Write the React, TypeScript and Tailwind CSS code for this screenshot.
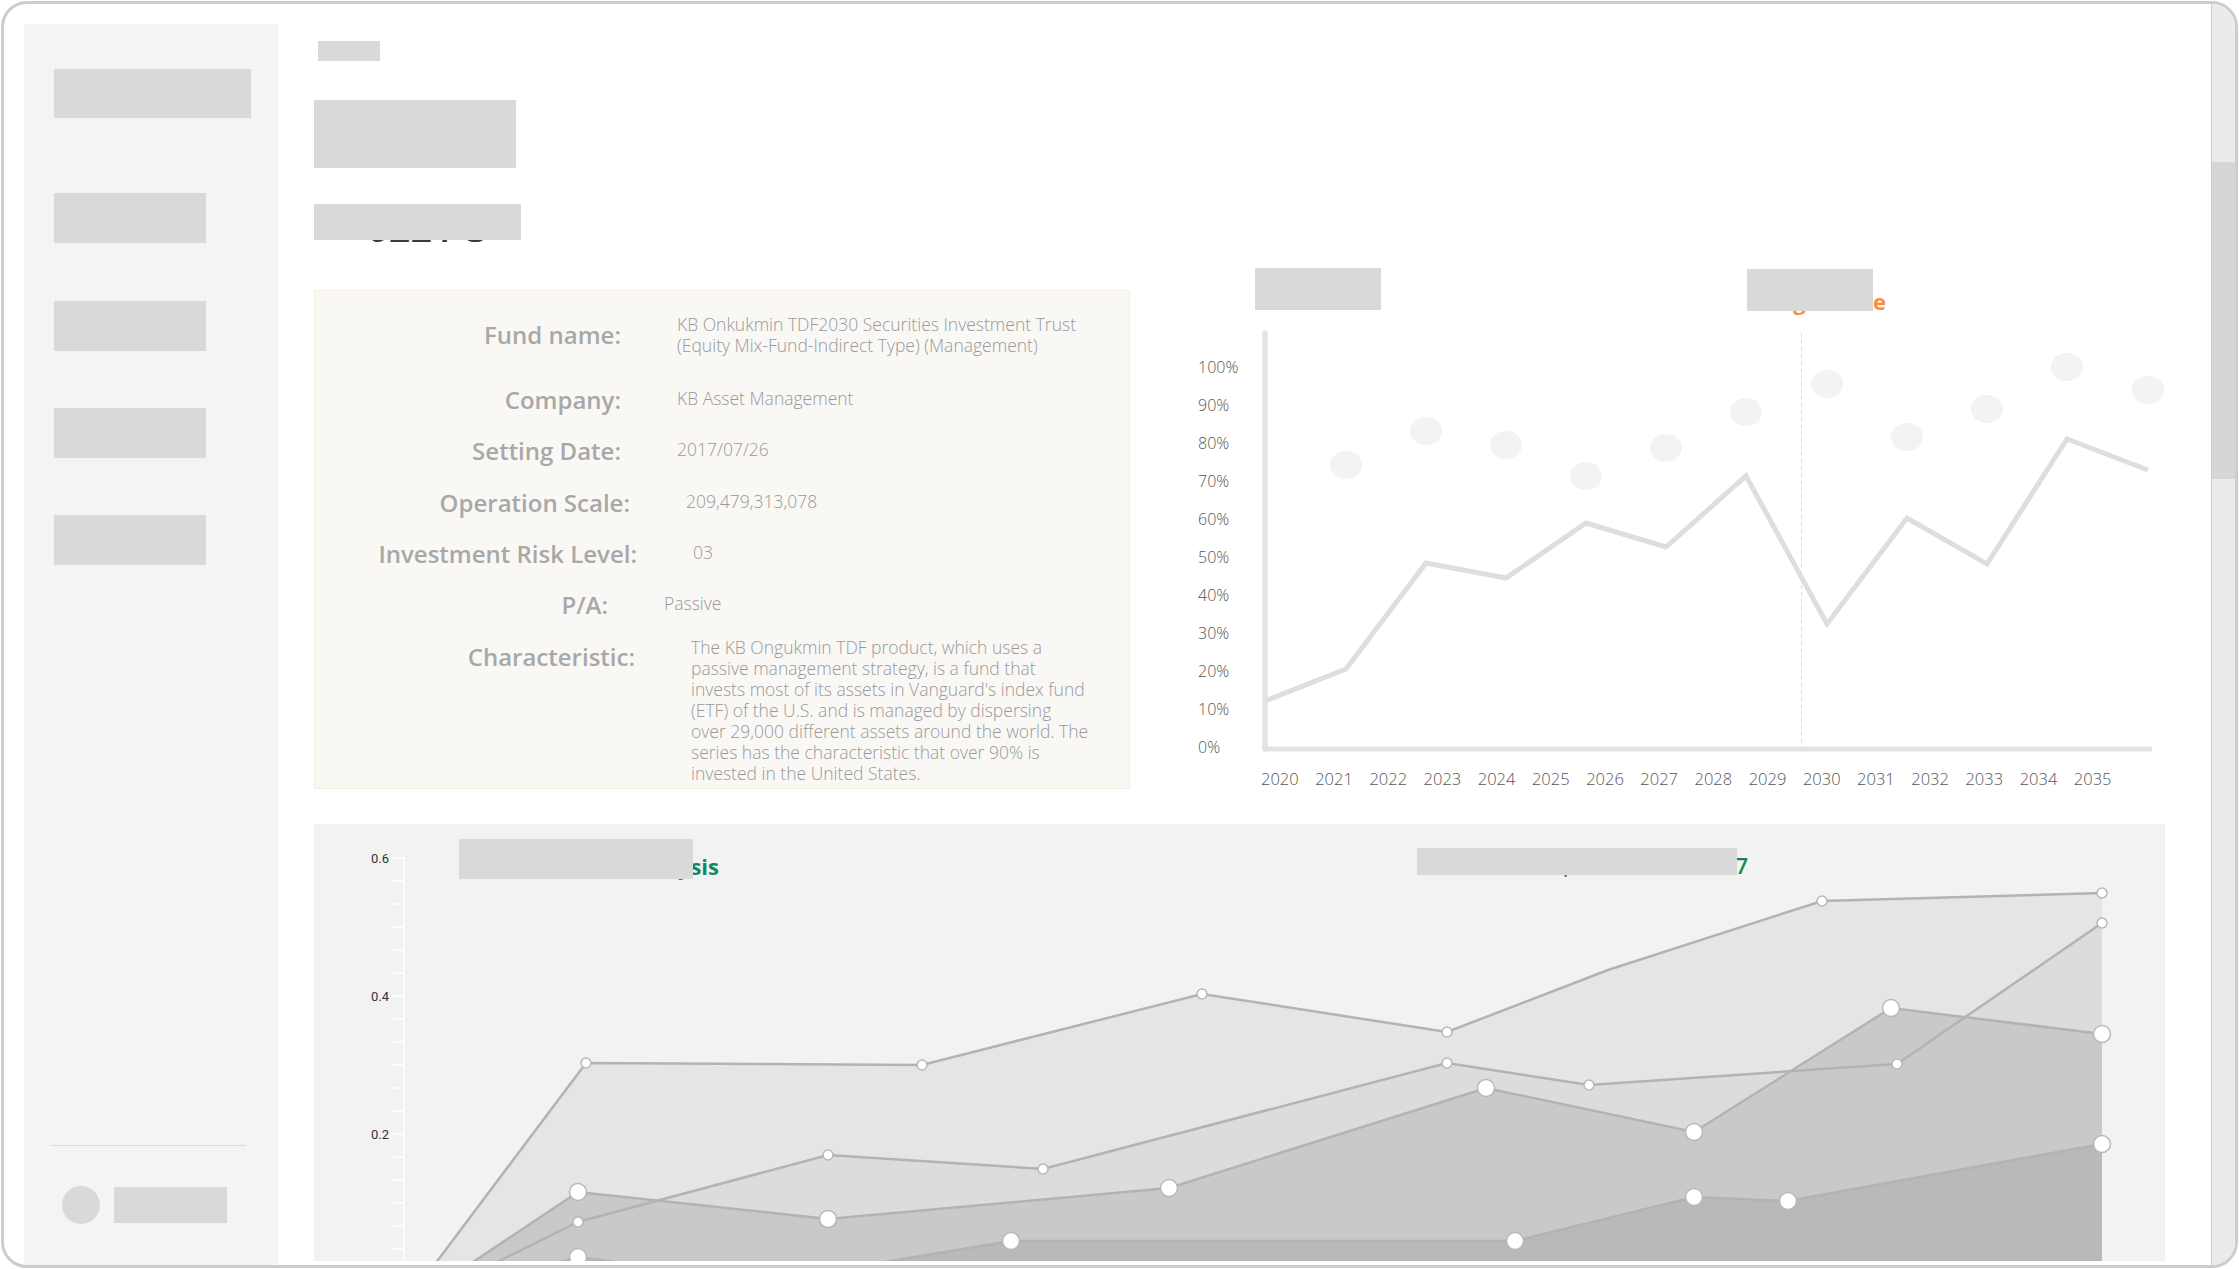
import React from 'react';

type InfoRow = {
    label: string;
    labelCls: string;
    rowCls: string;
    value: React.ReactNode;
    valueCls: string;
};

const infoRows: InfoRow[] = [
    {
        label: 'Fund name:',
        labelCls: 'w-[306px]',
        rowCls: 'items-center',
        value: (
            <>
                KB Onkukmin TDF2030 Securities Investment Trust
                <br />
                (Equity Mix-Fund-Indirect Type) (Management)
            </>
        ),
        valueCls: '',
    },
    { label: 'Company:', labelCls: 'w-[306px]', rowCls: 'mt-[26px] items-center', value: 'KB Asset Management', valueCls: 'pb-1' },
    { label: 'Setting Date:', labelCls: 'w-[306px]', rowCls: 'mt-[15px] items-center', value: '2017/07/26', valueCls: 'pb-1' },
    { label: 'Operation Scale:', labelCls: 'w-[315px]', rowCls: 'mt-4 items-center', value: '209,479,313,078', valueCls: 'pb-1' },
    { label: 'Investment Risk Level:', labelCls: 'w-[322px]', rowCls: 'mt-[15px] items-center', value: '03', valueCls: 'pb-1' },
    { label: 'P/A:', labelCls: 'w-[293px]', rowCls: 'mt-[15px] items-center', value: 'Passive', valueCls: 'pb-1' },
    {
        label: 'Characteristic:',
        labelCls: 'w-[320px] mt-[2px]',
        rowCls: 'mt-[14px] items-start',
        value: (
            <>
                The KB Ongukmin TDF product, which uses a<br />
                passive management strategy, is a fund that<br />
                invests most of its assets in Vanguard's index fund<br />
                (ETF) of the U.S. and is managed by dispersing<br />
                over 29,000 different assets around the world. The<br />
                series has the characteristic that over 90% is<br />
                invested in the United States.
            </>
        ),
        valueCls: '',
    },
];

const percentLabels = ['100%', '90%', '80%', '70%', '60%', '50%', '40%', '30%', '20%', '10%', '0%'];
const years = Array.from({ length: 16 }, (_, i) => 2020 + i);

// ratio line (svg coords, origin at plot top-left)
const ratioLine: [number, number][] = [
    [3, 371], [84, 339], [164, 233], [244, 248], [324, 193], [404, 217],
    [484, 146], [565, 294], [645, 188], [725, 234], [805, 109], [886, 140],
];
const bubbles: [number, number][] = [
    [84, 135], [164, 101], [244, 115], [324, 146], [404, 118], [484, 82],
    [565, 54], [645, 107], [725, 79], [805, 37], [886, 60],
];

type Series = { pts: [number, number][]; fill: string; r: number; skip: number[] };

// stacked area series (panel coords)
const areaSeries: Series[] = [
    {
        pts: [[91, 480], [272, 239], [608, 241], [888, 170], [1133, 208], [1294, 146], [1508, 77], [1788, 69]],
        fill: '#e5e5e5',
        r: 5,
        skip: [0, 5],
    },
    {
        pts: [[98, 480], [264, 398], [514, 331], [729, 345], [1133, 239], [1275, 261], [1583, 240], [1788, 99]],
        fill: '#dcdcdc',
        r: 5,
        skip: [0],
    },
    {
        pts: [[96, 480], [264, 368], [514, 395], [855, 364], [1172, 264], [1380, 308], [1577, 184], [1788, 210]],
        fill: '#c9c9c9',
        r: 8.5,
        skip: [0],
    },
    {
        pts: [[100, 480], [264, 433], [450, 458], [697, 417], [1201, 417], [1380, 373], [1474, 377], [1788, 320]],
        fill: '#b9b9b9',
        r: 8.5,
        skip: [0, 2],
    },
];

const toPoints = (pts: [number, number][]) => pts.map(([x, y]) => `${x},${y}`).join(' ');

function Sidebar() {
    return (
        <aside className="flex w-[254px] shrink-0 flex-col bg-[#f4f4f4] pb-[41px] pt-[45px]">
            <div className="ml-[30px] h-[49px] w-[197px] bg-[#d9d9d9]" />
            <div className="ml-[30px] mt-[75px] h-[50px] w-[152px] bg-[#d9d9d9]" />
            <div className="ml-[30px] mt-[58px] h-[50px] w-[152px] bg-[#d9d9d9]" />
            <div className="ml-[30px] mt-[57px] h-[50px] w-[152px] bg-[#d9d9d9]" />
            <div className="ml-[30px] mt-[57px] h-[50px] w-[152px] bg-[#d9d9d9]" />

            <div className="mt-auto">
                <div className="ml-[27px] h-px w-[195px] bg-[#d9d9d9]" />
                <div className="ml-[38px] mt-10 flex items-center">
                    <div className="h-[38px] w-[38px] rounded-full bg-[#d9d9d9]" />
                    <div className="ml-[14px] h-9 w-[113px] bg-[#d9d9d9]" />
                </div>
            </div>
        </aside>
    );
}

function InfoCard() {
    return (
        <div className="mt-[22px] h-[499px] w-[816px] shrink-0 border border-[#f3eee3] bg-[#f9f8f5] pt-[23px]">
            {infoRows.map((row) => (
                <div key={row.label} className={`flex ${row.rowCls}`}>
                    <div className={`shrink-0 text-right text-[24px] font-semibold leading-[36px] text-[#a8a8a8] ${row.labelCls}`}>
                        {row.label}
                    </div>
                    <div className={`ml-14 whitespace-nowrap text-[17.5px] font-light leading-[21px] text-[#999999] ${row.valueCls}`}>
                        {row.value}
                    </div>
                </div>
            ))}
        </div>
    );
}

function RatioChart() {
    return (
        <div className="ml-[68px] min-w-0 flex-1">
            {/* Titles */}
            <div className="flex h-[42px] items-start">
                <div className="ml-[57px] h-[42px] w-[126px] bg-[#d9d9d9]" />
                <div className="relative ml-[366px] mt-px h-[42px] w-[126px]">
                    <span className="absolute right-[-13px] top-[21px] whitespace-nowrap text-[22px] font-bold leading-none text-[#ff8a3d]">
                        Target Date
                    </span>
                    <div className="absolute inset-0 bg-[#d9d9d9]" />
                </div>
            </div>

            {/* Plot */}
            <div className="mt-5 flex h-[422px]">
                <div className="flex h-[422px] w-[64px] shrink-0 flex-col pt-[18px]">
                    {percentLabels.map((p) => (
                        <div key={p} className="h-[38px] shrink-0 text-[16px] font-light leading-[38px] text-[#555555]">
                            {p}
                        </div>
                    ))}
                </div>
                <svg width={903} height={422} className="block shrink-0">
                    <line x1={3} y1={3} x2={3} y2={419} stroke="#e3e3e3" strokeWidth={5.5} strokeLinecap="round" />
                    <line x1={3} y1={419} x2={888} y2={419} stroke="#e3e3e3" strokeWidth={5} strokeLinecap="round" />
                    <line x1={539.5} y1={3} x2={539.5} y2={421} stroke="#dddddd" strokeWidth={1} strokeDasharray="4 3" />
                    <polyline points={toPoints(ratioLine)} fill="none" stroke="#dedede" strokeWidth={5} />
                    {bubbles.map(([cx, cy]) => (
                        <ellipse key={cx} cx={cx} cy={cy} rx={16} ry={14} fill="#f3f3f3" />
                    ))}
                </svg>
            </div>

            <div className="mt-[17px] flex pl-[63px]">
                {years.map((y) => (
                    <div key={y} className="w-[54.2px] shrink-0 text-[16.5px] font-light leading-5 text-[#555555]">
                        {y}
                    </div>
                ))}
            </div>
        </div>
    );
}

function AreaPanel() {
    const ticks = Array.from({ length: 18 }, (_, k) => 34 + 23 * k);
    return (
        <div className="relative mt-[35px] h-[437px] shrink-0 overflow-hidden bg-[#f2f2f2]">
            <svg width={1851} height={437} className="block">
                {areaSeries.map((s) => (
                    <polygon
                        key={s.fill}
                        points={toPoints([...s.pts, [1788, 480], [s.pts[0][0], 480]])}
                        fill={s.fill}
                    />
                ))}
                {areaSeries.map((s) => (
                    <polyline key={s.fill} points={toPoints(s.pts)} fill="none" stroke="#b3b3b3" strokeWidth={2.5} />
                ))}
                {areaSeries.map((s) =>
                    s.pts.map(([x, y], i) =>
                        s.skip.includes(i) ? null : (
                            <circle key={`${s.fill}-${i}`} cx={x} cy={y} r={s.r} fill="#ffffff" stroke="#b8b8b8" strokeWidth={1.5} />
                        )
                    )
                )}

                <line x1={90} y1={33} x2={90} y2={437} stroke="#ffffff" strokeWidth={1.5} />
                {ticks.map((t) => (
                    <line key={t} x1={79} y1={t} x2={90} y2={t} stroke="#ffffff" strokeWidth={1.5} />
                ))}
                {[
                    ['0.6', 34],
                    ['0.4', 172],
                    ['0.2', 310],
                ].map(([label, y]) => (
                    <text
                        key={label}
                        x={75}
                        y={y}
                        textAnchor="end"
                        dominantBaseline="central"
                        fontSize={13}
                        fill="#333333"
                        fontFamily="Roboto, 'Liberation Sans', sans-serif"
                    >
                        {label}
                    </text>
                ))}
            </svg>

            {/* chart titles */}
            <div className="absolute left-0 top-[31px] w-[405px] whitespace-nowrap text-right text-[22px] font-bold leading-none text-[#12895c]">
                Portfolio Analysis
            </div>
            <div className="absolute left-[145px] top-[15px] h-10 w-[234px] bg-[#d9d9d9]" />

            <div className="absolute left-0 top-[30px] w-[1434px] whitespace-nowrap text-right text-[22px] font-semibold leading-none text-[#12895c]">
                Base date 26, 2016 ~ Mar 2017
            </div>
            <div className="absolute left-[1103px] top-6 h-[27px] w-[320px] bg-[#d9d9d9]" />
        </div>
    );
}

export default function App() {
    return (
        <div className="h-screen w-full bg-white p-px font-['Open_Sans',sans-serif]">
            <div className="flex h-full overflow-hidden rounded-[26px] border-[3px] border-[#cdcdcd] bg-white">
                <div className="flex min-w-0 flex-1 gap-9 overflow-hidden pl-5 pt-5">
                    <Sidebar />

                    <main className="flex min-w-0 flex-1 flex-col pr-[46px] pt-[17px]">
                        <div className="ml-1 h-5 w-[62px] shrink-0 bg-[#d9d9d9]" />
                        <div className="mt-[39px] h-[68px] w-[202px] shrink-0 bg-[#d9d9d9]" />

                        <div className="relative mt-9 h-[44px] shrink-0">
                            <p className="pl-[53px] pt-[4px] text-[38px] font-semibold leading-none text-[#3a3a3a]">0221-3</p>
                            <div className="absolute left-0 top-0 h-9 w-[207px] bg-[#d9d9d9]" />
                        </div>

                        <div className="mt-5 flex shrink-0 items-start">
                            <InfoCard />
                            <RatioChart />
                        </div>

                        <AreaPanel />
                    </main>
                </div>

                {/* scrollbar */}
                <div className="w-6 shrink-0 border-l border-[#cccccc] bg-[#ebebeb]">
                    <div className="mt-[158px] h-[317px] bg-[#d6d6d6]" />
                </div>
            </div>
        </div>
    );
}
